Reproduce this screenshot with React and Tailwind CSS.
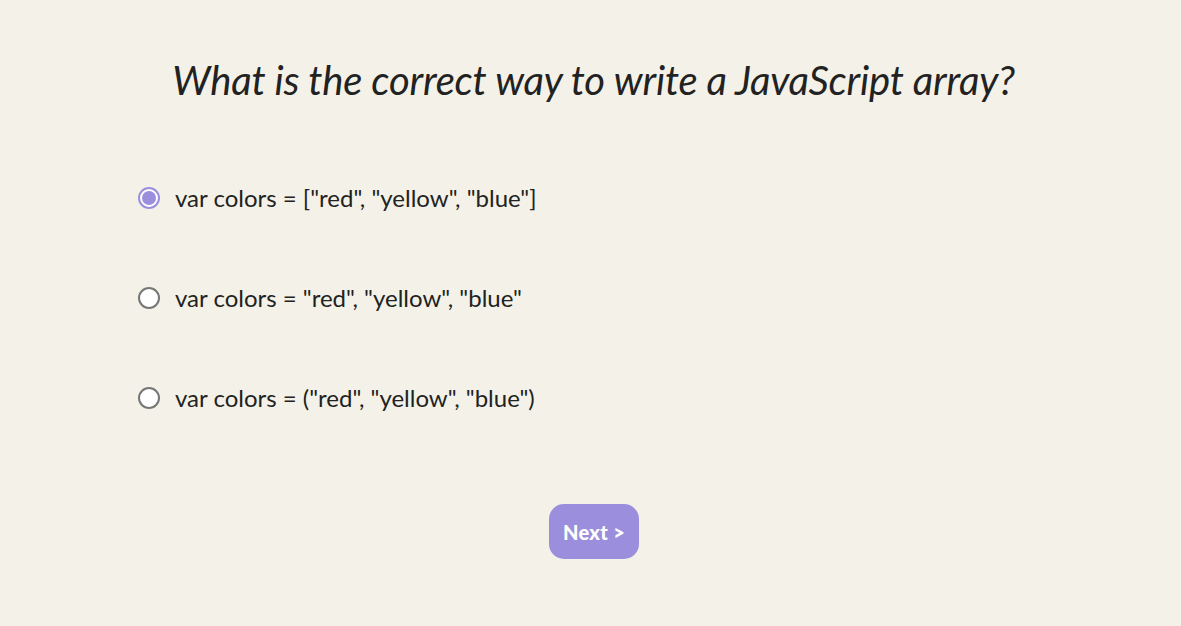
import { useState } from 'react';

const options = [
  'var colors = ["red", "yellow", "blue"]',
  'var colors = "red", "yellow", "blue"',
  'var colors = ("red", "yellow", "blue")',
];

const App = () => {
  const [picked, setPicked] = useState(0);

  return (
    <div className="min-h-screen w-full bg-[#f4f2e8] text-[#222] font-['Lato',sans-serif]">
      {/* Question */}
      <h1 className="pt-[52px] pl-[6px] text-center text-[40px] italic leading-[56px] tracking-[-0.2px]">
        What is the correct way to write a JavaScript array?
      </h1>

      {/* Answers */}
      <div className="mt-[75px] pl-[138px] flex flex-col gap-[70px]">
        {options.map((opt, i) => (
          <label
            key={i}
            onClick={() => setPicked(i)}
            className="flex items-center h-[30px] cursor-pointer"
          >
            <span
              className={`w-[22px] h-[22px] rounded-full border-2 bg-white flex items-center justify-center ${
                picked === i ? 'border-[#9b8fdd]' : 'border-[#767676]'
              }`}
            >
              {picked === i && <span className="w-[14px] h-[14px] rounded-full bg-[#9b8fdd]" />}
            </span>
            <span className="ml-[15px] text-[24px]">{opt}</span>
          </label>
        ))}
      </div>

      {/* Next */}
      <div className="mt-[91px] flex justify-center">
        <button className="ml-[7px] w-[90px] h-[55px] rounded-[15px] bg-[#9b8fdd] text-white font-black text-[20px] tracking-[0.3px]">
          Next &gt;
        </button>
      </div>
    </div>
  );
};

export default App;
